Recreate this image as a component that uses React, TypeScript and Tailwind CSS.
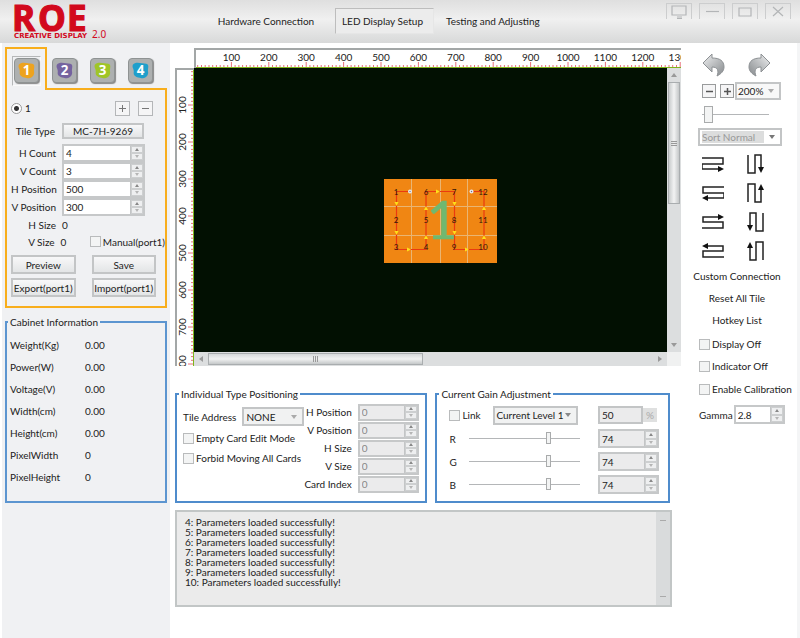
import React from "react";

type Option = { id: string; label: string };

const box = "border border-[#b4b6b8]";

function Spinner({ id, value, className = "", tone = "bg-white text-[#222]", disabled = false }: {
  id: string; value: string; className?: string; tone?: string; disabled?: boolean;
}) {
  return (
    <div className={`flex border-2 border-[#c6c8c9] ${tone} ${className}`}>
      <input id={id} defaultValue={value} disabled={disabled} className="w-0 min-w-0 flex-1 bg-transparent pl-[2px] outline-none" />
      <div className="flex w-[13px] flex-col border-l border-[#c3c5c6]">
        {["Increase", "Decrease"].map((word, i) => (
          <button key={word} type="button" aria-label={`${word} ${id}`} disabled={disabled}
            className="flex min-h-0 flex-1 items-center justify-center border border-[#cdcfd0] bg-[#eeeff0]">
            <svg width="4" height="3" viewBox="0 0 4 3"><path d={i === 0 ? "M0 3 2 0 4 3z" : "M0 0 2 3 4 0z"} fill={i === 0 ? "#888" : "#b5b5b5"} /></svg>
          </button>
        ))}
      </div>
    </div>
  );
}

function Picker({ id, label, value, className = "", tone = "w-full bg-transparent text-[#222]", arrow = "#888" }: {
  id: string; label: string; value: string; className?: string; tone?: string; arrow?: string;
}) {
  return (
    <div className={`relative flex items-center border-2 border-[#c3c5c6] ${className}`}>
      <select id={id} aria-label={label} className={`appearance-none outline-none ${tone}`}>
        <option>{value}</option>
      </select>
      <svg className="pointer-events-none absolute right-[5px]" width="6" height="4" viewBox="0 0 6 4"><path d="M0 0h6L3 4z" fill={arrow} /></svg>
    </div>
  );
}

function Tick({ id, label, className = "" }: Option & { className?: string }) {
  return (
    <label htmlFor={id} className={`flex items-center gap-[2px] whitespace-nowrap ${className}`}>
      <input id={id} type="checkbox" className="size-[11px] shrink-0 appearance-none border border-[#b9bbbc] bg-[#f3f4f4] checked:bg-[#777]" />
      {label}
    </label>
  );
}

function Push({ children, className = "" }: { children: React.ReactNode; className?: string }) {
  return (
    <button type="button" className={`flex items-center justify-center whitespace-nowrap border-2 border-[#c3c5c6] bg-linear-to-b from-[#f8f8f9] to-[#e3e5e6] ${className}`}>
      {children}
    </button>
  );
}

function Range({ id, label, value, className = "" }: { id: string; label: string; value: number; className?: string }) {
  return (
    <input id={id} aria-label={label} type="range" min={0} max={100} defaultValue={value}
      className={`min-w-0 appearance-none bg-transparent [&::-webkit-slider-runnable-track]:h-px [&::-webkit-slider-runnable-track]:bg-[#b4b6b8] [&::-webkit-slider-thumb]:appearance-none [&::-webkit-slider-thumb]:border [&::-webkit-slider-thumb]:border-[#a9abac] [&::-webkit-slider-thumb]:bg-[#f3f4f4] ${className}`} />
  );
}

const windowIcons = [
  { name: "Display", draw: <path d="M6 3h14v9H6zM11 14h5M11 15.500h5" /> },
  { name: "Minimize", draw: <path d="M7 8.500h13" /> },
  { name: "Maximize", draw: <path d="M7 5h12v8H7z" /> },
  { name: "Close", draw: <path d="M8 4l10 9M18 4L8 13" /> },
];

function Header() {
  return (
    <header className="flex h-[43px] items-center bg-linear-to-b from-[#dfdfdf] via-[#f0f0f0] via-45% to-[#d8d9d9] pl-[2px]">
      <svg className="h-[43px] w-[207px] shrink-0 overflow-visible" viewBox="0 0 207 43" role="img" aria-label="ROE Creative Display 2.0" fill="#d2091d">
        <g fontFamily="Open Sans, Noto Sans, sans-serif" fontWeight="700" fontSize="35" stroke="#d2091d" strokeWidth="1.2">
          <text x="10" y="31">R</text>
          <text x="36" y="31">O</text>
          <text x="65" y="31">E</text>
        </g>
        <text x="12" y="38" fontFamily="DejaVu Sans, sans-serif" fontWeight="700" fontSize="7">CREATIVE DISPLAY</text>
        <text x="90" y="38" fontFamily="Noto Sans, sans-serif" fontSize="10">2.0</text>
      </svg>
      <nav className="mb-[2px] flex h-[26px] flex-1 items-stretch gap-[12px]">
        <button type="button" className="w-[114px] whitespace-nowrap">Hardware Connection</button>
        <button type="button" className="w-[99px] whitespace-nowrap border border-[#e6e6e6] border-t-[#bdbdbd] border-l-[#bdbdbd] bg-[#ececec] pr-2 pl-[4px]">LED Display Setup</button>
        <button type="button" className="w-[92px] whitespace-nowrap">Testing and Adjusting</button>
      </nav>
      <div className="flex gap-[7px] self-start pt-[3px] pr-[9px]">
        {windowIcons.map((w) => (
          <button key={w.name} type="button" aria-label={w.name} className="h-[16px] w-[26px] border border-b-0 border-[#cccdce]">
            <svg width="24" height="15" viewBox="1 1 24 15" fill="none" stroke="#b3b5b7" strokeWidth="1.2">{w.draw}</svg>
          </button>
        ))}
      </div>
    </header>
  );
}

const ports = [
  { n: "1", color: "#eda31f" },
  { n: "2", color: "#75639f" },
  { n: "3", color: "#9fc527" },
  { n: "4", color: "#1f9fcb" },
];

function PortButton({ n, color }: { n: string; color: string }) {
  return (
    <button type="button" aria-label={`Port ${n}`} className="size-[25px] rounded-[4px] border border-[#8f9393] bg-[#adb0b0] shadow-[1px_1px_1px_#888]">
      <svg width="23" height="23" viewBox="0 0 24 24">
        <path d="M4 6C7 2 14 5 18 5c4 1 1 5 2 9 0 4-3 6-7 6-5-1-9-2-8-7 0-3-2-4-1-7z" fill={color} />
        <text x="12" y="17" textAnchor="middle" fontFamily="Noto Sans, sans-serif" fontWeight="700" fontSize="14" fill="#fff">{n}</text>
      </svg>
    </button>
  );
}

const tileFields = [
  { id: "h-count", label: "H Count", value: "4" },
  { id: "v-count", label: "V Count", value: "3" },
  { id: "h-position", label: "H Position", value: "500" },
  { id: "v-position", label: "V Position", value: "300" },
];

const cabinet = [
  ["Weight(Kg)", "0.00"], ["Power(W)", "0.00"], ["Voltage(V)", "0.00"], ["Width(cm)", "0.00"],
  ["Height(cm)", "0.00"], ["PixelWidth", "0"], ["PixelHeight", "0"],
];

function PortPanel() {
  return (
    <section>
      <div className="flex">
        <div className="relative z-10 flex h-[43px] w-[42px] shrink-0 items-start justify-center border-2 border-b-0 border-[#f8ae1c] bg-[#f0f1f3] pt-[7px]">
          <div className="border border-[#fafafa] border-t-[#b5b7b8] border-l-[#b5b7b8] p-px"><PortButton {...ports[0]} /></div>
        </div>
        <div className="flex flex-1 items-start gap-[13px] pt-[11px] pl-[5px]">
          {ports.slice(1).map((p) => <PortButton key={p.n} {...p} />)}
        </div>
      </div>
      <div className="-mt-[2px] flex h-[220px] flex-col border-2 border-[#f8ae1c] pt-[10px] pl-[4px]">
        <div className="flex h-[16px] items-center">
          <label className="flex flex-1 items-center gap-[3px]">
            <input type="radio" name="card" defaultChecked className="size-[11px] appearance-none rounded-full border border-[#999] bg-[radial-gradient(#333_0_2px,#fff_3px)]" />
            1
          </label>
          <div className="flex gap-[8px] pr-[12px]">
            {["+", "−"].map((s) => (
              <button key={s} type="button" aria-label={s === "+" ? "Add card" : "Remove card"} className={`flex size-[15px] items-center justify-center bg-[#f5f5f6] ${box}`}>
                <svg width="9" height="9" viewBox="0 0 9 9" stroke="#777" strokeWidth="1"><path d={s === "+" ? "M1 4.500h7M4.500 1v7" : "M1 4.500h7"} /></svg>
              </button>
            ))}
          </div>
        </div>
        <div className="mt-[6px] flex h-[18px] items-center gap-[7px]">
          <span className="w-[44px] text-right">Tile Type</span>
          <Push className="h-[16px] w-[82px]">MC-7H-9269</Push>
        </div>
        <div className="mt-[4px]">
          {tileFields.map((f) => (
            <div key={f.id} className="flex h-[18px] items-center gap-[6px]">
              <label htmlFor={f.id} className="w-[45px] text-right whitespace-nowrap">{f.label}</label>
              <Spinner id={f.id} value={f.value} className="h-[18px] w-[83px]" />
            </div>
          ))}
          <div className="flex h-[17px] items-center gap-[6px]"><span className="w-[45px] text-right">H Size</span>0</div>
          <div className="flex h-[17px] items-center gap-[6px]">
            <span className="w-[45px] text-right">V Size</span>
            <span className="w-[24px]">0</span>
            <Tick id="manual" label="Manual(port1)" />
          </div>
        </div>
        <div className="mt-[5px] grid grid-cols-2 gap-x-[16px] gap-y-[4px] pr-[9px]">
          {["Preview", "Save", "Export(port1)", "Import(port1)"].map((t) => <Push key={t} className="h-[19px]">{t}</Push>)}
        </div>
      </div>
    </section>
  );
}

function Sidebar() {
  return (
    <aside className="flex w-[168px] shrink-0 flex-col bg-[#f0f1f3] px-[3px] pt-[4px]">
      <PortPanel />
      <fieldset className="mt-[7px] h-[188px] border-2 border-[#5c95d0] pb-[6px]">
        <legend className="ml-px px-[2px] leading-[14px]">Cabinet Information</legend>
        <dl className="flex flex-col pt-[5px] pl-[3px]">
          {cabinet.map(([k, v]) => (
            <div key={k} className="flex h-[22px] items-center"><dt className="w-[75px]">{k}</dt><dd>{v}</dd></div>
          ))}
        </dl>
      </fieldset>
    </aside>
  );
}

function tickPath(step: number, total: number, vertical: boolean, edge: number) {
  let d = "";
  for (let i = 1; i * step < total; i++) {
    const at = (i * step - 2).toFixed(1);
    const len = i % 10 === 0 ? 5 : 2;
    d += vertical ? `M${edge} ${at}h${-len}` : `M${at} ${edge}v${-len}`;
  }
  return d;
}

function TopRuler() {
  return (
    <svg className="block h-[20px] w-full border-t-2 border-l-2 border-[#a3a7a7]" fill="#222" fontSize="10">
      <path d={tickPath(3.74, 1400, false, 17)} stroke="#e8707a" strokeWidth="1" />
      <rect y="17" width="100%" height="1" fill="#7fb51c" />
      {Array.from({ length: 13 }, (_, i) => (
        <text key={i} x={(i + 1) * 37.4 - 2} y="11" textAnchor="middle">{(i + 1) * 100}</text>
      ))}
    </svg>
  );
}

function SideRuler() {
  return (
    <svg className="block h-full w-[19px] border-t-2 border-l-2 border-[#a3a7a7]" fill="#222" fontSize="10">
      <path d={tickPath(3.7, 300, true, 16)} stroke="#e8707a" strokeWidth="1" />
      <rect x="16" width="1" height="100%" fill="#7fb51c" />
      {Array.from({ length: 8 }, (_, i) => (
        <text key={i} transform={`translate(9 ${(i + 1) * 37 - 2}) rotate(-90)`} textAnchor="middle">{(i + 1) * 100}</text>
      ))}
    </svg>
  );
}

const cells: [number, number, number][] = [
  [1, 12, 16], [2, 12, 44], [3, 12, 71], [6, 42, 16], [5, 42, 44], [4, 42, 71],
  [7, 70, 16], [8, 70, 44], [9, 70, 71], [12, 99, 16], [11, 99, 44], [10, 99, 71],
];
const markers: [number, number, number][] = [
  [12.500, 25, 90], [12.500, 54, 90], [25, 70.500, 0], [42, 58, -90], [42, 29, -90], [54, 12.500, 0],
  [70.500, 25, 90], [70.500, 54, 90], [83, 70.500, 0], [100, 58, -90], [100, 29, -90],
];

function TileMap() {
  return (
    <svg className="absolute top-[111px] left-[190px]" width="113" height="84" viewBox="0 0 113 84">
      <rect width="113" height="84" fill="#f08613" />
      <path d="M27.500 0v84M56.500 0v84M83.500 0v84M0 27.500h113M0 56.500h113" stroke="#e9b573" strokeWidth="1" />
      <path d="M26 12.500H12.500v58H42v-58h28.500v58H100v-58H87" fill="none" stroke="#ea3a10" strokeWidth="1.200" />
      <text x="58" y="60" textAnchor="middle" fontSize="53" fill="#70b870" stroke="#70b870" strokeWidth=".6">1</text>
      {cells.map(([n, x, y]) => <text key={n} x={x} y={y} textAnchor="middle" fontSize="8" fill="#30150a">{n}</text>)}
      {markers.map(([x, y, r]) => <path key={`${x}-${y}`} d="M-2-2 2 0-2 2z" transform={`translate(${x} ${y}) rotate(${r})`} fill="#ffe01a" />)}
      <circle cx="26" cy="12.500" r="2" fill="#e8eaf5" /><circle cx="87.500" cy="12.500" r="2" fill="#e8eaf5" />
      <circle cx="26" cy="12.500" r=".7" fill="#777" /><circle cx="87.500" cy="12.500" r=".7" fill="#777" />
    </svg>
  );
}

function Workspace() {
  return (
    <section className="grid h-[318px] grid-cols-[19px_minmax(0,1fr)_14px] grid-rows-[20px_minmax(0,1fr)_14px]">
      <div className="col-span-2 col-start-2"><TopRuler /></div>
      <div className="row-span-2 row-start-2"><SideRuler /></div>
      <div className="relative col-start-2 row-start-2 overflow-hidden bg-[#021002]"><TileMap /></div>
      <div className="col-start-3 row-start-2 flex flex-col items-center justify-between bg-[#dcdedf] py-[5px]">
        <svg width="6" height="4" viewBox="0 0 6 4"><path d="M0 4h6L3 0z" fill="#999" /></svg>
        <div className="mt-[5px] mb-auto flex h-[122px] w-[12px] flex-col items-center justify-center gap-px border border-[#a9adaf] bg-linear-to-r from-[#c9cccd] via-[#f2f3f3] to-[#c5c8c9]">
          <i className="h-px w-[6px] bg-[#999]" /><i className="h-px w-[6px] bg-[#999]" /><i className="h-px w-[6px] bg-[#999]" />
        </div>
        <svg width="6" height="4" viewBox="0 0 6 4"><path d="M0 0h6L3 4z" fill="#999" /></svg>
      </div>
      <div className="col-start-2 row-start-3 flex items-center bg-[#dcdedf] px-[5px]">
        <svg width="4" height="6" viewBox="0 0 4 6"><path d="M4 0v6L0 3z" fill="#999" /></svg>
        <div className="mr-auto ml-[5px] flex h-[12px] w-[215px] items-center justify-center gap-px border border-[#a9adaf] bg-linear-to-b from-[#d5d8d9] via-[#f0f1f1] to-[#c5c8c9]">
          <i className="h-[6px] w-px bg-[#999]" /><i className="h-[6px] w-px bg-[#999]" /><i className="h-[6px] w-px bg-[#999]" />
        </div>
        <svg width="4" height="6" viewBox="0 0 4 6"><path d="M0 0v6l4-3z" fill="#999" /></svg>
      </div>
      <div className="col-start-3 row-start-3 bg-[#f0f1f1]" />
    </section>
  );
}

function Positioning() {
  return (
    <fieldset className="h-[116px] min-w-0 flex-[252] border-2 border-[#4f8ccc]">
      <legend className="ml-[2px] px-[2px] leading-[14px]">Individual Type Positioning</legend>
      <div className="flex justify-between pt-[2px] pr-[8px] pl-[6px]">
        <div className="flex flex-col">
          <div className="mt-[4px] mb-[2px] flex items-center justify-between gap-[6px]">
            <label htmlFor="tile-address" className="whitespace-nowrap">Tile Address</label>
            <Picker id="tile-address" label="Tile Address" value="NONE" className="h-[19px] w-[62px] bg-[#f1f2f2]" tone="w-full bg-transparent pl-[2px] text-[#222]" arrow="#aaa" />
          </div>
          <Tick id="empty-card" label="Empty Card Edit Mode" className="h-[20px]" />
          <Tick id="forbid" label="Forbid Moving All Cards" className="h-[20px]" />
        </div>
        <div>
          {["H Position", "V Position", "H Size", "V Size", "Card Index"].map((l) => (
            <div key={l} className="flex h-[18px] items-center justify-end gap-[6px]">
              <label htmlFor={`card-${l}`} className="whitespace-nowrap">{l}</label>
              <Spinner id={`card-${l}`} value="0" disabled className="h-[17px] w-[61px]" tone="bg-[#ebebec] text-[#888]" />
            </div>
          ))}
        </div>
      </div>
    </fieldset>
  );
}

function Gain() {
  return (
    <fieldset className="h-[116px] min-w-0 flex-[234] border-2 border-[#4f8ccc]">
      <legend className="ml-[2px] px-[2px] leading-[14px]">Current Gain Adjustment</legend>
      <div className="flex flex-col pt-[2px] pr-[9px] pl-[12px]">
        <div className="flex h-[24px] items-center">
          <Tick id="link" label="Link" className="w-[44px]" />
          <Picker id="level" label="Current level" value="Current Level 1" className="h-[19px] w-[85px] bg-[#f1f2f2]" tone="w-full bg-transparent pl-px text-[#222]" />
          <input aria-label="Gain percent" defaultValue="50" className="ml-auto h-[18px] w-[45px] border-2 border-[#c3c5c6] bg-[#ebebec] pl-[2px] text-[#222]" />
          <span className="mr-[2px] flex h-[14px] w-[14px] items-center justify-center bg-[#dfe0e0] text-[#aaa]">%</span>
        </div>
        {["R", "G", "B"].map((c) => (
          <div key={c} className="flex h-[23px] items-center">
            <label htmlFor={`gain-${c}`} className="w-[20px]">{c}</label>
            <Range id={`gain-${c}`} label={`${c} gain level`} value={73} className="mr-[18px] h-[14px] flex-1 [&::-webkit-slider-thumb]:-mt-[6px] [&::-webkit-slider-thumb]:h-[12px] [&::-webkit-slider-thumb]:w-[5px]" />
            <Spinner id={`gain-${c}`} value="74" className="h-[19px] w-[61px]" tone="bg-[#ebebec] text-[#222]" />
          </div>
        ))}
      </div>
    </fieldset>
  );
}

function Log() {
  return (
    <section className="mt-[7px] mr-[9px] flex h-[97px] border-2 border-[#c2c6c6] bg-[#ebebeb]">
      <ul className="flex-1 pt-[5px] pl-[8px] leading-[10px]">
        {[4, 5, 6, 7, 8, 9, 10].map((n) => <li key={n}>{n}: Parameters loaded successfully!</li>)}
      </ul>
      <div className="flex w-[14px] flex-col items-center justify-between bg-[#d9dbdc] py-[8px]">
        <i className="h-px w-[6px] bg-[#aaa]" /><i className="h-px w-[6px] bg-[#aaa]" />
      </div>
    </section>
  );
}

const rowRoutes = [
  { name: "rows from top left", d: "M0 3h21v6H0v5h17", head: "M16 11l6 3-6 3z" },
  { name: "rows from top right", d: "M22 3H1v6h21v5H5", head: "M6 11l-6 3 6 3z" },
  { name: "rows from bottom left", d: "M0 15h21V9H1V4h17", head: "M16 1l6 3-6 3z" },
  { name: "rows from bottom right", d: "M22 15H1V9h20V4H5", head: "M6 1L0 4l6 3z" },
];
const columnRoutes = [
  { name: "columns from top left", d: "M2 1v18h7V1h6v14", head: "M12 13h6l-3 6z" },
  { name: "columns from bottom left", d: "M2 19V1h7v18h6V5", head: "M12 7h6l-3-6z" },
  { name: "columns from top right", d: "M17 1v18h-7V1H4v14", head: "M1 13h6l-3 6z" },
  { name: "columns from bottom right", d: "M17 19V1h-7v18H4V5", head: "M1 7h6L4 1z" },
];

function Turn({ name, flip }: { name: string; flip?: boolean }) {
  return (
    <button type="button" aria-label={name} className="h-[26px] w-[24px]">
      <svg width="24" height="26" viewBox="0 0 24 26">
        <defs>
          <linearGradient id={name} x1="0" y1="0" x2="1" y2="1"><stop offset="0" stopColor="#f0f1f2" /><stop offset="1" stopColor="#85898c" /></linearGradient>
        </defs>
        <path d="M1 12 10 3v4c8 0 12 3 12 9 0 4-3 7-7 9 2-5 1-9-5-9v5z" transform={flip ? "matrix(-1 0 0 1 24 0)" : undefined} fill={`url(#${name})`} stroke="#8d9194" strokeWidth="1" />
      </svg>
    </button>
  );
}

function Tools() {
  return (
    <aside className="flex w-[119px] shrink-0 flex-col border-r-[3px] border-[#f4f5f6] pt-[8px] pr-[12px] pl-[17px]">
      <div className="flex gap-[21px] pl-[4px]"><Turn name="Undo" /><Turn name="Redo" flip /></div>
      <div className="mt-[5px] flex items-center gap-[4px] pl-[4px]">
        {["−", "+"].map((s) => (
          <button key={s} type="button" aria-label={s === "+" ? "Zoom in" : "Zoom out"} className="flex size-[14px] shrink-0 items-center justify-center border border-[#999b9c] bg-[#f5f5f6]">
            <svg width="9" height="9" viewBox="0 0 9 9" stroke="#555" strokeWidth="1.500"><path d={s === "+" ? "M1 4.500h7M4.500 1v7" : "M1 4.500h7"} /></svg>
          </button>
        ))}
        <Picker id="zoom" label="Zoom" value="200%" className="-ml-[3px] h-[18px] w-[46px] bg-[#f8f8f8]" tone="w-full bg-transparent pl-px text-[#222]" arrow="#aaa" />
      </div>
      <Range id="zoom-level" label="Zoom level" value={3} className="mt-[5px] ml-[4px] h-[18px] w-[67px] [&::-webkit-slider-thumb]:-mt-[8px] [&::-webkit-slider-thumb]:h-[17px] [&::-webkit-slider-thumb]:w-[9px]" />
      <Picker id="sort" label="Sort order" value="Sort Normal" className="mt-[5px] h-[18px] w-[84px] bg-white pl-[2px]" tone="w-[62px] bg-[#dcdddd] text-[#999]" arrow="#777" />
      <div className="mt-[8px] grid w-[68px] grid-cols-[22px_20px] justify-between gap-y-[9px] self-start pl-[4px]">
        {rowRoutes.map((r, i) => [r, columnRoutes[i]].map((icon, k) => (
          <button key={icon.name} type="button" aria-label={icon.name} className="h-[20px]">
            <svg width={k === 0 ? 22 : 20} height="20" viewBox={k === 0 ? "0 -1 22 20" : "0 0 20 20"}>
              <path d={icon.d} fill="none" stroke="#222" strokeWidth="1.500" /><path d={icon.head} fill="#111" />
            </svg>
          </button>
        )))}
      </div>
      <div className="mt-[4px] flex w-[78px] flex-col items-center self-start">
        {["Custom Connection", "Reset All Tile", "Hotkey List"].map((t) => (
          <button key={t} type="button" className="h-[22px] whitespace-nowrap">{t}</button>
        ))}
      </div>
      <div className="mt-[2px] flex flex-col pl-px">
        <Tick id="display-off" label="Display Off" className="h-[22px]" />
        <Tick id="indicator-off" label="Indicator Off" className="h-[22px]" />
        <Tick id="calibration" label="Enable Calibration" className="h-[24px]" />
        <div className="mt-[4px] flex items-center gap-px">
          <label htmlFor="gamma">Gamma</label>
          <Spinner id="gamma" value="2.8" className="h-[19px] w-[52px]" />
        </div>
      </div>
    </aside>
  );
}

export default function App() {
  return (
    <div className="flex min-h-screen flex-col bg-white font-['Lato',sans-serif] text-[10px] leading-[12px] text-[#222]">
      <Header />
      <div className="flex flex-1">
        <div className="w-[2px] bg-white" />
        <Sidebar />
        <main className="min-w-0 flex-1 pt-[5px] pl-[5px]">
          <Workspace />
          <div className="mt-[21px] mr-[11px] flex gap-[8px]"><Positioning /><Gain /></div>
          <Log />
        </main>
        <Tools />
      </div>
    </div>
  );
}
